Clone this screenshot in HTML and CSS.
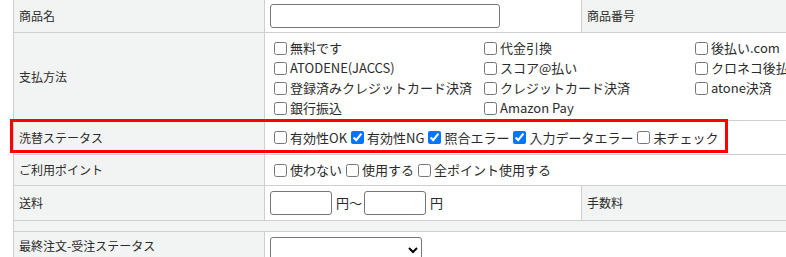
FILE: index.html
```html
<!DOCTYPE html>
<html lang="ja">
<head>
<meta charset="utf-8">
<title>検索条件</title>
<link rel="stylesheet" href="styles.css">
</head>
<body>
<div class="page">
  <div class="form-grid">
    <div class="lbl">商品名</div>
    <div class="val"><input type="text" class="txt txt-name"></div>
    <div class="lbl">商品番号</div>

    <div class="lbl">支払方法</div>
    <div class="val span2 pay">
      <div class="pay-grid">
        <label class="chk"><input type="checkbox">無料です</label>
        <label class="chk"><input type="checkbox">代金引換</label>
        <label class="chk"><input type="checkbox">後払い.com</label>
        <label class="chk"><input type="checkbox">ATODENE(JACCS)</label>
        <label class="chk"><input type="checkbox">スコア@払い</label>
        <label class="chk"><input type="checkbox">クロネコ後払い</label>
        <label class="chk"><input type="checkbox">登録済みクレジットカード決済</label>
        <label class="chk"><input type="checkbox">クレジットカード決済</label>
        <label class="chk"><input type="checkbox">atone決済</label>
        <label class="chk"><input type="checkbox">銀行振込</label>
        <label class="chk"><input type="checkbox">Amazon Pay</label>
      </div>
    </div>

    <div class="lbl">洗替ステータス</div>
    <div class="val span2">
      <div class="chk-row">
        <label class="chk"><input type="checkbox">有効性OK</label>
        <label class="chk"><input type="checkbox" checked>有効性NG</label>
        <label class="chk"><input type="checkbox" checked>照合エラー</label>
        <label class="chk"><input type="checkbox" checked>入力データエラー</label>
        <label class="chk"><input type="checkbox">未チェック</label>
      </div>
    </div>

    <div class="lbl">ご利用ポイント</div>
    <div class="val span2">
      <div class="chk-row">
        <label class="chk"><input type="checkbox">使わない</label>
        <label class="chk"><input type="checkbox">使用する</label>
        <label class="chk"><input type="checkbox">全ポイント使用する</label>
      </div>
    </div>

    <div class="lbl">送料</div>
    <div class="val">
      <input type="text" class="txt txt-yen"><span class="unit">円～</span><input type="text" class="txt txt-yen"><span class="unit">円</span>
    </div>
    <div class="lbl">手数料</div>

    <div class="blank"></div>

    <div class="lbl top">最終注文-受注ステータス</div>
    <div class="val span2 top">
      <select class="sel"><option></option></select>
    </div>
  </div>
  <div class="highlight"></div>
</div>
</body>
</html>
```

FILE: styles.css
```css
html, body {
  margin: 0;
  padding: 0;
  overflow: hidden;
  background: #ffffff;
}

body {
  font-family: "Noto Sans CJK JP", "Noto Sans", sans-serif;
  font-size: 13px;
  line-height: 20px;
  color: #2b2b2b;
}

.page {
  position: relative;
  padding-left: 13px;
}

.form-grid {
  display: grid;
  width: 1100px;
  grid-template-columns: 250px 316px 1fr;
  grid-template-rows: 32px 87px 33px 30px 34px 10px 40px;
  gap: 1px;
  background: #cfcfcf;
  border: 1px solid #cfcfcf;
  margin-top: -1px;
}

.lbl {
  background: #f2f3f3;
  padding: 0 5px;
  display: flex;
  align-items: center;
  font-size: 12px;
}

.val {
  background: #ffffff;
  padding: 0 5px;
  display: flex;
  align-items: center;
}

.span2 {
  grid-column: span 2;
}

.blank {
  grid-column: 1 / -1;
  background: #f2f3f3;
}

.top {
  align-items: flex-start;
}

.lbl.top {
  padding-top: 4px;
}

.val.top {
  padding-top: 5px;
}

.pay {
  align-items: flex-start;
  padding-top: 5px;
}

.pay-grid {
  display: grid;
  grid-template-columns: 210px 211px 210px;
  grid-auto-rows: 20px;
}

.chk-row {
  display: flex;
  align-items: center;
}

.chk {
  display: inline-flex;
  align-items: center;
  white-space: nowrap;
  height: 20px;
}

.chk input {
  width: 13px;
  height: 13px;
  margin: 0 3px 0 4px;
}

.txt {
  box-sizing: border-box;
  height: 24px;
  border: 1px solid #767676;
  border-radius: 3px;
  padding: 1px 3px;
  margin: 0;
  font: inherit;
  background: #ffffff;
}

.txt-name {
  width: 230px;
  margin-top: -1px;
}

.txt-yen {
  width: 62px;
}

.unit {
  margin: 0 2px 0 4px;
}

.sel {
  box-sizing: border-box;
  width: 152px;
  height: 26px;
  border: 1px solid #767676;
  border-radius: 3px;
  background: #ffffff;
  font: inherit;
  margin: 0;
}

.highlight {
  position: absolute;
  left: 10px;
  top: 120px;
  width: 718px;
  height: 34px;
  box-sizing: border-box;
  border: 3px solid #ff0000;
  pointer-events: none;
}
```
